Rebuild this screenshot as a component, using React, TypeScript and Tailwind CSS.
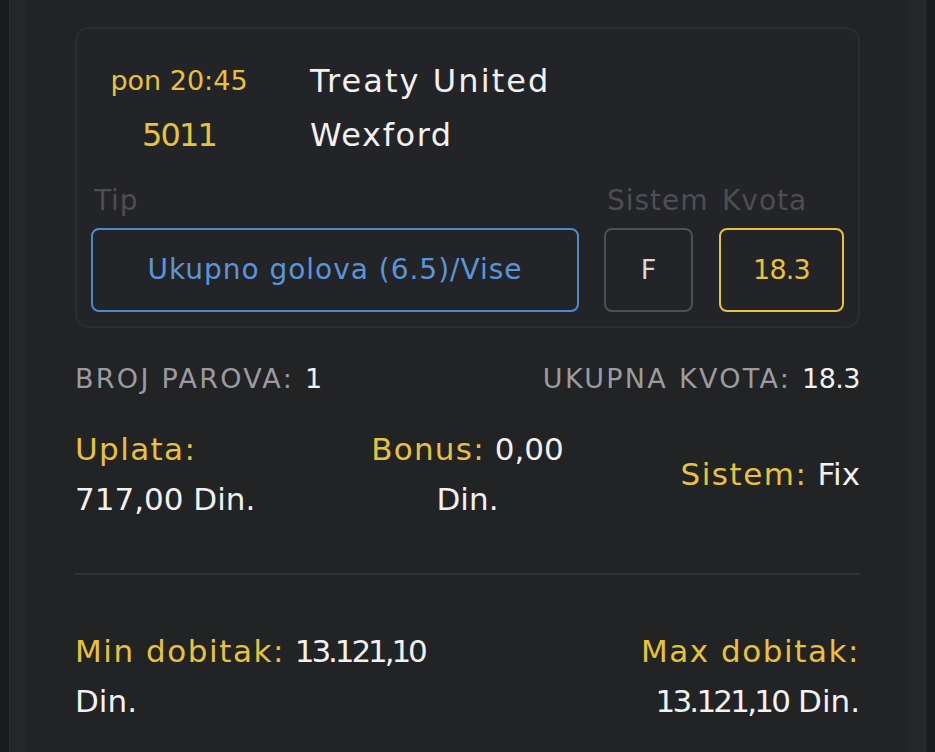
import React from "react";

const Y = "text-[#e8c23a]";
const W = "text-[#f1f1f1]";

export default function App() {
  return (
    <div
      className="w-[935px] h-[752px] overflow-hidden bg-[#1b1c1f] pl-[9px] pr-[9px]"
      style={{ fontFamily: '"DejaVu Sans", "Open Sans", sans-serif' }}
    >
      <div className="h-full border-x border-[#2c2d30] bg-[#252629] px-[17px]">
        <div className="h-full bg-[#222325] px-[48px] pt-[27px]">
          {/* Card */}
          <div className="rounded-[14px] border-2 border-[#2c2d30] bg-[#232427] px-[14px] pt-[25px] pb-[14px]">
            <div className="flex">
              <div className="w-[176px] flex flex-col items-center">
                <div className={`h-[54px] leading-[54px] text-[27px] ${Y}`}>pon 20:45</div>
                <div className={`h-[54px] leading-[54px] text-[32px] tracking-[-0.06em] ${Y}`}>5011</div>
              </div>
              <div className="ml-[43px] flex flex-col">
                <div className={`h-[54px] leading-[54px] text-[32px] ${W} tracking-[0.065em]`}>Treaty United</div>
                <div className={`h-[54px] leading-[54px] text-[32px] ${W} tracking-[0.05em]`}>Wexford</div>
              </div>
            </div>
            <div className="mt-[19px] flex items-end">
              <div className="flex-1 flex flex-col">
                <div className="h-[40px] leading-[40px] text-[28px] tracking-[0.03em] text-[#4d4e51] pl-[3px]">Tip</div>
                <div className="mt-[7px] h-[84px] rounded-[8px] border-2 border-[#4a8ad2] flex items-center justify-center text-[28px] tracking-[0.035em] text-[#5b95d9]">
                  Ukupno golova (6.5)/Vise
                </div>
              </div>
              <div className="ml-[25px] flex flex-col w-[89px]">
                <div className="h-[40px] leading-[40px] text-[28px] tracking-[0.035em] text-[#4d4e51] whitespace-nowrap pl-[3px]">Sistem</div>
                <div className="mt-[7px] w-[89px] h-[84px] rounded-[8px] border-2 border-[#4f5053] flex items-center justify-center text-[27px] text-[#d8d8d8]">
                  F
                </div>
              </div>
              <div className="ml-[26px] flex flex-col w-[125px]">
                <div className="h-[40px] leading-[40px] text-[28px] tracking-[0.035em] text-[#4d4e51] pl-[3px]">Kvota</div>
                <div className="mt-[7px] w-[125px] h-[84px] rounded-[8px] border-2 border-[#e8c23a] flex items-center justify-center text-[27px] tracking-[-0.03em] text-[#e8c23a]">
                  18.3
                </div>
              </div>
            </div>
          </div>

          {/* Stats */}
          <div className="mt-[33px] flex justify-between h-[36px] leading-[36px] text-[27px] uppercase tracking-[0.085em]">
            <div className="text-[#9a9b9e]">
              Broj parova: <span className={W}>1</span>
            </div>
            <div className="text-[#9a9b9e]">
              Ukupna kvota: <span className={`${W} tracking-[-0.02em]`}>18.3</span>
            </div>
          </div>

          {/* Summary */}
          <div className="mt-[27px] flex items-center justify-between text-[31px] leading-[50px]">
            <div className="w-[260px]">
              <div className={`${Y} tracking-[0.045em]`}>Uplata:</div>
              <div className={W}>717,00 Din.</div>
            </div>
            <div className="w-[220px] text-center">
              <span className={`${Y} tracking-[0.04em]`}>Bonus:</span> <span className={W}>0,00</span>
              <br />
              <span className={W}>Din.</span>
            </div>
            <div className="w-[260px] text-right">
              <span className={`${Y} tracking-[0.05em]`}>Sistem:</span> <span className={W}>Fix</span>
            </div>
          </div>

          <div className="mt-[49px] h-[2px] bg-[#323336]" />

          {/* Winnings */}
          <div className="mt-[51px] flex justify-between text-[31px] leading-[50px]">
            <div>
              <div>
                <span className={`${Y} tracking-[0.05em]`}>Min dobitak:</span>{" "}
                <span className={`${W} tracking-[-0.1em]`}>13.121,10</span>
              </div>
              <div className={W}>Din.</div>
            </div>
            <div className="text-right">
              <div className={`${Y} tracking-[0.05em]`}>Max dobitak:</div>
              <div className={W}>
                <span className="tracking-[-0.09em]">13.121,10</span> Din.
              </div>
            </div>
          </div>
        </div>
      </div>
    </div>
  );
}
